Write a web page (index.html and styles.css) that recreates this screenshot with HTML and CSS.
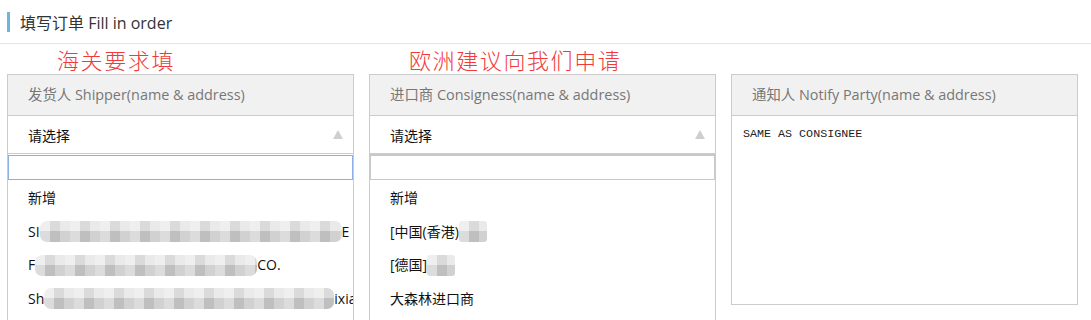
FILE: index.html
```html
<!DOCTYPE html>
<html lang="zh-CN">
<head>
<meta charset="utf-8">
<title>填写订单</title>
<link rel="stylesheet" href="styles.css">
</head>
<body>
<div class="topbar">
  <span class="mark"></span>
  <span class="title">填写订单 Fill in order</span>
</div>
<div class="columns">
  <div class="col">
    <div class="note note-a">海关要求填</div>
    <div class="panel">
      <div class="panel-head">发货人 Shipper(name &amp; address)</div>
      <div class="select"><span>请选择</span><span class="caret"></span></div>
      <div class="search focused"></div>
      <ul class="options">
        <li>新增</li>
        <li>SI<span class="blur w-a"></span>E</li>
        <li>F<span class="blur w-b"></span>CO.</li>
        <li>Sh<span class="blur w-c"></span>ixia</li>
        <li>&nbsp;</li>
      </ul>
    </div>
  </div>
  <div class="col">
    <div class="note note-b">欧洲建议向我们申请</div>
    <div class="panel">
      <div class="panel-head">进口商 Consigness(name &amp; address)</div>
      <div class="select"><span>请选择</span><span class="caret"></span></div>
      <div class="search"></div>
      <ul class="options">
        <li>新增</li>
        <li>[中国(香港)<span class="blur w-s"></span></li>
        <li>[德国]<span class="blur w-s"></span></li>
        <li>大森林进口商</li>
        <li>&nbsp;</li>
      </ul>
    </div>
  </div>
  <div class="col">
    <div class="note"></div>
    <div class="panel">
      <div class="panel-head">通知人 Notify Party(name &amp; address)</div>
      <div class="textbox">SAME AS CONSIGNEE</div>
    </div>
  </div>
</div>
</body>
</html>
```
FILE: styles.css
```css
html, body {
  margin: 0;
  padding: 0;
  overflow: hidden;
  background: #fff;
  font-family: "Open Sans", "Noto Sans CJK SC", sans-serif;
}

.topbar {
  height: 44px;
  border-bottom: 1px solid #e6e6e6;
  display: flex;
  align-items: center;
  padding-left: 7px;
  box-sizing: border-box;
}

.mark {
  width: 3px;
  height: 20px;
  background: #6cb6e2;
  margin-right: 10px;
  margin-top: 1px;
}

.title {
  font-size: 16px;
  color: #333;
}

.columns {
  display: flex;
  gap: 15px;
  padding-left: 7px;
}

.col {
  width: 347px;
  display: flex;
  flex-direction: column;
}

.note {
  height: 30px;
  line-height: 30px;
  font-size: 22px;
  color: #f23a3a;
  letter-spacing: 1.6px;
  font-family: "Noto Sans CJK SC", sans-serif;
  font-weight: 300;
  white-space: nowrap;
}

.note-a { padding-left: 50px; }
.note-b { padding-left: 40px; }

.panel {
  border: 1px solid #cccccc;
  background: #fff;
}

.panel-head {
  height: 40px;
  line-height: 40px;
  background: #f1f1f1;
  border-bottom: 1px solid #cccccc;
  padding-left: 20px;
  font-size: 14.4px;
  color: #777;
  white-space: nowrap;
}

.select {
  height: 37px;
  border-bottom: 1px solid #cccccc;
  display: flex;
  align-items: center;
  justify-content: space-between;
  padding: 0 10px 0 20px;
  font-size: 14px;
  color: #111;
}

.caret {
  width: 0;
  height: 0;
  border-left: 5px solid transparent;
  border-right: 5px solid transparent;
  border-bottom: 9px solid #cfcfcf;
}

.search {
  height: 26px;
  box-sizing: border-box;
  border: 1px solid #c8c8c8;
  border-top-width: 2px;
}

.search.focused {
  border: 1px solid #8eaee8;
  margin-top: 1px;
  height: 25px;
}

.options {
  list-style: none;
  margin: 0;
  padding: 1px 0 0 0;
}

.options li {
  height: 33.5px;
  line-height: 33.5px;
  padding-left: 20px;
  font-size: 14px;
  color: #111;
  white-space: nowrap;
  overflow: hidden;
}

.blur {
  display: inline-block;
  vertical-align: middle;
  height: 21px;
  margin-top: -2px;
  border-radius: 7px;
  background:
    repeating-linear-gradient(90deg, rgba(255,255,255,0.35) 0 10px, rgba(0,0,0,0.05) 10px 20px, rgba(255,255,255,0.15) 20px 30px),
    linear-gradient(180deg, #e6e6e6 0 50%, #c9c9c9 50% 100%);
  filter: blur(0.6px);
}

.w-a { width: 302px; }
.w-b { width: 222px; }
.w-c { width: 290px; }
.w-s { width: 28px; border-radius: 3px; }

.textbox {
  height: 188px;
  box-sizing: border-box;
  padding: 11px 11px;
  font-family: "Liberation Mono", monospace;
  font-size: 11.7px;
  color: #222;
}
```
